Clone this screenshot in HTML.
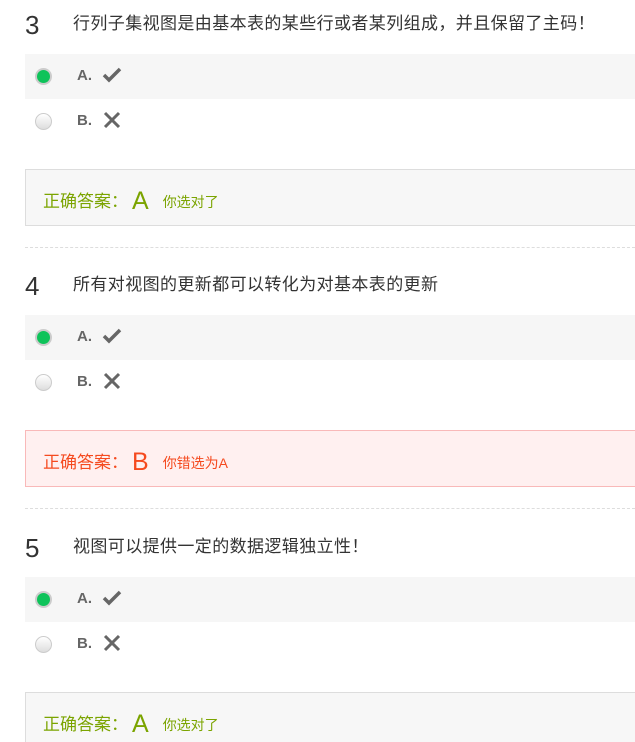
<!DOCTYPE html>
<html><head><meta charset="utf-8"><style>
html,body{margin:0;width:635px;height:742px;overflow:hidden}
body{background:#fff;font-family:"Liberation Sans","Noto Sans CJK SC",sans-serif;position:relative}
.q{position:absolute;left:0;width:635px;height:219px}
.num{position:absolute;left:25px;top:10px;font-size:26px;color:#333;line-height:30px}
.tt{position:absolute;left:73px;top:14px;font-size:17px;letter-spacing:0.4px;color:#333;line-height:20px;white-space:nowrap}
.opt{position:absolute;left:25px;width:610px;height:45px}
.opt.a{top:54px;background:#f6f6f6}
.opt.b{top:99px}
.rd{position:absolute;left:10px;top:14px;width:17px;height:17px;border-radius:50%;background:linear-gradient(#fff,#ddd);border:1px solid #ccc;box-sizing:border-box}
.rd.on{background:#0ec35a;border:2px solid #ccc}
.lb{position:absolute;left:52px;top:13px;font-size:15px;font-weight:bold;color:#666}
.ic{position:absolute;left:77px;top:11px}
.ans{position:absolute;left:25px;top:169px;width:610px;height:57px;box-sizing:border-box;border:1px solid #ddd;border-right:none;background:#f7f7f7}
.ans.w{border-color:#f9b9b9;background:#fff0f0}
.ans.last{height:50px;border-bottom:none}
.at{position:absolute;left:17px;top:17px;font-size:17px;color:#7ba400;white-space:nowrap}
.ans.w .at{color:#f54a1f}
.big{font-size:25px;vertical-align:-2px;margin:0 14px 0 4px}
.sm{font-size:14px}
.dash{position:absolute;left:25px;top:247px;width:610px;border-top:1px dashed #ddd}
</style></head><body>
<svg width="0" height="0" style="position:absolute"><defs>
<symbol id="ck" viewBox="0 0 20 20"><path d="M2 10l5 5L18 4" fill="none" stroke="#666" stroke-width="3.5"/></symbol>
<symbol id="x" viewBox="0 0 20 20"><path d="M3 3L17 17M17 3L3 17" fill="none" stroke="#666" stroke-width="3"/></symbol>
</defs></svg>

<div class="q" style="top:0">
<div class="num">3</div><div class="tt">行列子集视图是由基本表的某些行或者某列组成，并且保留了主码！</div>
<div class="opt a"><div class="rd on"></div><div class="lb">A.</div><svg class="ic" width="20" height="20"><use href="#ck"/></svg></div>
<div class="opt b"><div class="rd"></div><div class="lb">B.</div><svg class="ic" width="20" height="20"><use href="#x"/></svg></div>
<div class="ans"><div class="at">正确答案：<span class="big">A</span><span class="sm">你选对了</span></div></div>
<div class="dash"></div>
</div>

<div class="q" style="top:261px">
<div class="num">4</div><div class="tt">所有对视图的更新都可以转化为对基本表的更新</div>
<div class="opt a"><div class="rd on"></div><div class="lb">A.</div><svg class="ic" width="20" height="20"><use href="#ck"/></svg></div>
<div class="opt b"><div class="rd"></div><div class="lb">B.</div><svg class="ic" width="20" height="20"><use href="#x"/></svg></div>
<div class="ans w"><div class="at">正确答案：<span class="big">B</span><span class="sm">你错选为A</span></div></div>
<div class="dash"></div>
</div>

<div class="q" style="top:523px">
<div class="num">5</div><div class="tt">视图可以提供一定的数据逻辑独立性！</div>
<div class="opt a"><div class="rd on"></div><div class="lb">A.</div><svg class="ic" width="20" height="20"><use href="#ck"/></svg></div>
<div class="opt b"><div class="rd"></div><div class="lb">B.</div><svg class="ic" width="20" height="20"><use href="#x"/></svg></div>
<div class="ans last"><div class="at">正确答案：<span class="big">A</span><span class="sm">你选对了</span></div></div>
</div>
</body></html>
